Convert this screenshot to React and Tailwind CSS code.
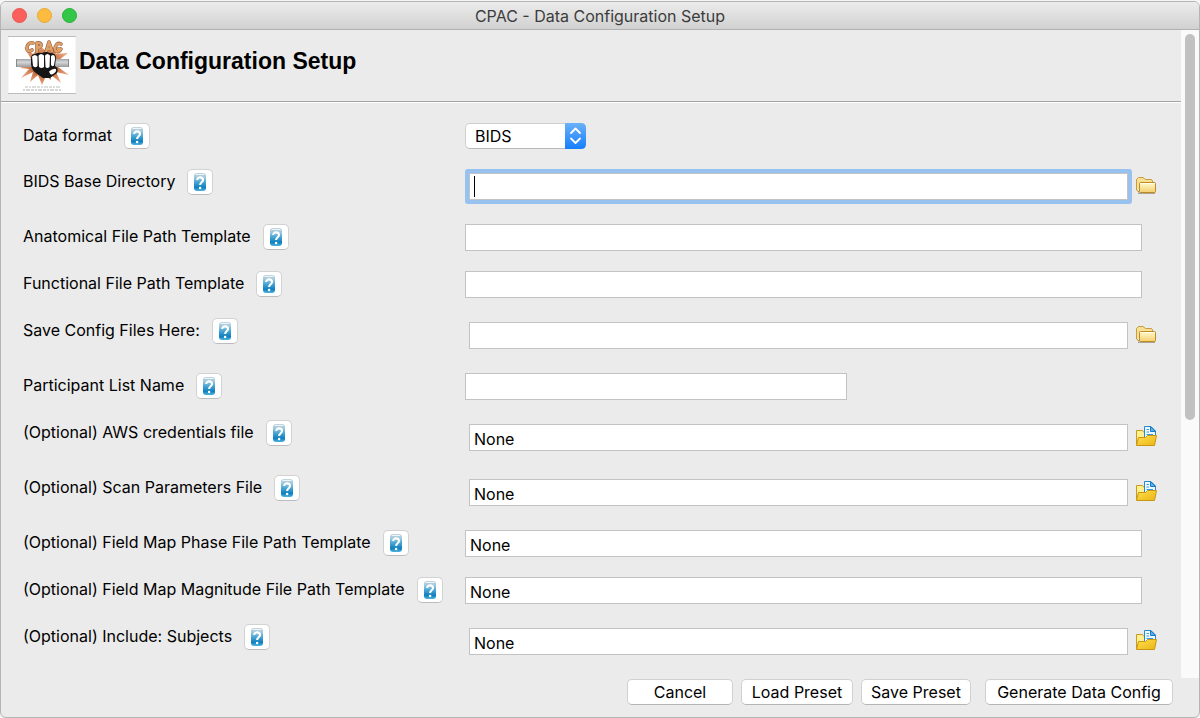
import React from 'react';

const fields = [
  { id: 'bids', label: 'BIDS Base Directory', browse: 'folder', value: '', active: true },
  { id: 'anat', label: 'Anatomical File Path Template', value: '' },
  { id: 'func', label: 'Functional File Path Template', value: '' },
  { id: 'save', label: 'Save Config Files Here:', browse: 'folder', value: '' },
  { id: 'list', label: 'Participant List Name', value: '', short: true },
  { id: 'aws', label: '(Optional) AWS credentials file', browse: 'file', value: 'None' },
  { id: 'scan', label: '(Optional) Scan Parameters File', browse: 'file', value: 'None' },
  { id: 'phase', label: '(Optional) Field Map Phase File Path Template', value: 'None' },
  { id: 'magnitude', label: '(Optional) Field Map Magnitude File Path Template', value: 'None' },
  { id: 'subjects', label: '(Optional) Include: Subjects', browse: 'file', value: 'None' },
];

function Logo() {
  return (
    <svg viewBox="0 0 68 58" className="h-[58px] w-[68px] shrink-0" aria-hidden="true">
      <defs>
        <linearGradient id="bar" x1="0" y1="0" x2="0" y2="1">
          <stop offset="0" stopColor="#a2a5a7" />
          <stop offset="0.4" stopColor="#d5d7d8" />
          <stop offset="1" stopColor="#999c9e" />
        </linearGradient>
        <radialGradient id="burst">
          <stop offset="0.3" stopColor="#8a4526" />
          <stop offset="0.65" stopColor="#d07c50" />
          <stop offset="1" stopColor="#e8a67c" />
        </radialGradient>
      </defs>
      <rect x="0.5" y="0.5" width="67" height="57" fill="#fff" />
      <path d="M0 0.5H68M0 57.5H68" stroke="#bcbcbc" />
      <path
        d="M16 11L25 18L32 10L38 15L44 10L48 18L60 17L51 24L57 27L50 31L61 39L48 36L53 47L43 39L43 44L38 40L34 49L30 39L22 46L25 36L13 42L21 33L12 32L20 28L14 23L23 23Z"
        fill="url(#burst)"
      />
      <rect x="8" y="23" width="53" height="8" rx="1" fill="url(#bar)" />
      <path d="M8.5 23v8M60.5 23v8" stroke="#8a8a8a" />
      <g fill="none" strokeLinecap="round" strokeLinejoin="round">
        <path d="M25 7C21 6 19 9 19 12S21 16 24 14M29 16V7C34 6 35 11 29 12M38 16L41 6L44 15M39 13H43M53 8C49 6 47 10 47 13S51 17 53 13H50" stroke="#94603f" strokeWidth="3.6" />
        <path d="M25 7C21 6 19 9 19 12S21 16 24 14M29 16V7C34 6 35 11 29 12M38 16L41 6L44 15M39 13H43M53 8C49 6 47 10 47 13S51 17 53 13H50" stroke="#e0a068" strokeWidth="2.4" />
      </g>
      <path d="M23 23Q23 18 27 18Q31 16 34 17Q38 15 42 17Q48 17 48 22L47 30Q51 32 49 37L42 42L35 42L28 37Q22 33 23 23Z" fill="#161616" />
      <path d="M24 20.5Q27 17.5 29.5 20.5V30Q27.5 32.5 25 30ZM30.5 19.5Q33 16.5 36 19.5V31Q33.5 33 31 31ZM37 19.5Q39.5 16.5 42 19.5L41.5 31Q39 33 37.5 31ZM43 20Q46.5 17.5 47.2 22L46 29.5Q44 31 43 29Z" fill="#fff" />
      <path d="M41 35.5Q45 32 48 33Q49 36 44 38.5Q42 39 41 35.5Z" fill="#fff" />
      <path d="M17 51H53" stroke="#bcbcbc" strokeWidth="1" strokeDasharray="3 1 2 1 4 1" />
      <path d="M15 54H54" stroke="#adadad" strokeWidth="1" strokeDasharray="2 1 4 1 3 1" />
    </svg>
  );
}

function HelpButton({ topic }) {
  return (
    <button
      type="button"
      aria-label={`Help: ${topic}`}
      className="flex h-[26px] w-[26px] shrink-0 items-center justify-center rounded-[5px] border border-[#d2d2d2] border-b-[#bcbcbc] bg-white"
    >
      <svg viewBox="0 0 14 20" className="h-5 w-3.5" aria-hidden="true">
        <defs>
          <linearGradient id="help" x1="0" y1="0" x2="0" y2="1">
            <stop offset="0" stopColor="#c5d4dc" />
            <stop offset="0.25" stopColor="#9cc8de" />
            <stop offset="0.5" stopColor="#4aa6d4" />
            <stop offset="0.8" stopColor="#0f7fbe" />
            <stop offset="1" stopColor="#4fb5e0" />
          </linearGradient>
        </defs>
        <rect x="1" y="1" width="12" height="18" rx="3" fill="url(#help)" />
        <path d="M3 2.5h8" stroke="#eff5f7" strokeLinecap="round" />
        <path d="M4.2 8C4.2 4.5 10 4.6 10 8C10 10.3 7.1 10.3 7.1 13" fill="none" stroke="#fff" strokeWidth="2.1" />
        <circle cx="7.1" cy="16" r="1.3" fill="#fff" />
      </svg>
    </button>
  );
}

function BrowseIcon({ kind }) {
  return (
    <svg viewBox="0 0 22 22" className="h-[22px] w-[22px]" aria-hidden="true">
      <defs>
        <linearGradient id="folder" x1="0" y1="0" x2="0" y2="1">
          <stop offset="0" stopColor="#fffbd0" />
          <stop offset="1" stopColor="#f3cf6b" />
        </linearGradient>
        <linearGradient id="open" x1="0" y1="0" x2="1" y2="1">
          <stop offset="0" stopColor="#ffe04f" />
          <stop offset="1" stopColor="#ebb414" />
        </linearGradient>
      </defs>
      {kind === 'folder' ? (
        <>
          <path d="M3 19.3H20" stroke="#aaa497" strokeWidth="1.4" />
          <path d="M1.5 16V5.5L3.5 3.5H8L10.5 5.5H16.5L17.5 7V9" fill="#f8df91" stroke="#c79b42" />
          <path d="M1.5 16L4 18" stroke="#b98928" />
          <rect x="4.5" y="8.5" width="16" height="10" rx="1" fill="url(#folder)" stroke="#bd8b23" />
          <path d="M6 9.5H19" stroke="#fffde8" />
        </>
      ) : (
        <>
          <path d="M1.5 20V5.5H7.5L9 7.5H17.5V12" fill="#fff08f" stroke="#c99a22" />
          <path d="M9.5 12.5V1.5H16L20.5 6V12.5" fill="#eef8ff" stroke="#2688ce" />
          <path d="M15.5 1.5V6.5H20.5Z" fill="#5fb0e8" stroke="#197bc4" />
          <path d="M11.5 4.5H14M11.5 7H14M11.5 9.5H18" stroke="#3d9bdb" strokeWidth="1.2" />
          <path d="M1.5 20.5L3.5 12.5H10.5L12.5 10.5H21.5L19.5 20.5Z" fill="url(#open)" stroke="#c99612" />
        </>
      )}
    </svg>
  );
}

function FieldLabel({ id, children }) {
  return (
    <div className="flex w-[442px] shrink-0 items-start gap-3">
      <label htmlFor={id} className="whitespace-nowrap leading-6">
        {children}
      </label>
      <HelpButton topic={children} />
    </div>
  );
}

const inputClass = 'h-[27px] w-full border border-[#c3c3c3] bg-white px-1 pt-[3px] text-base leading-5 outline-none';

function FieldRow({ field }) {
  const { id, label, browse, value, active, short } = field;
  return (
    <div className="flex items-start pb-5">
      <FieldLabel id={id}>{label}</FieldLabel>
      {browse ? (
        <div className="flex flex-1 items-center gap-[3px] pr-6">
          <div className={active ? 'relative flex-1 rounded-[3px] bg-[#97c2f0] p-1' : 'flex-1 p-1'}>
            <input id={id} type="text" defaultValue={value} className={`${inputClass} block`} />
            {active && <span className="absolute left-[9px] top-[7px] h-[21px] w-px bg-black" />}
          </div>
          <button type="button" aria-label={`Browse: ${label}`} className="shrink-0 pb-[3px]">
            <BrowseIcon kind={browse} />
          </button>
        </div>
      ) : (
        <div className="flex-1 pr-[39px]">
          <input id={id} type="text" defaultValue={value} className={`${inputClass} block ${short ? 'max-w-[382px]' : ''}`} />
        </div>
      )}
    </div>
  );
}

const actionClass =
  'h-[26px] rounded-[5px] border border-[#d0d0d0] border-b-[#b5b5b5] bg-white text-base leading-6 whitespace-nowrap';

export default function App() {
  return (
    <div className="h-screen bg-[#f5f5f5] pt-px font-['Inter',sans-serif] text-base text-black">
      <div className="flex h-full flex-col overflow-hidden rounded-[6px] border border-[#b4b4b4] bg-[#ebebeb]">
        <header className="grid h-7 shrink-0 grid-cols-[1fr_auto_1fr] items-center border-b border-[#b1b1b1] bg-linear-to-b from-[#ececec] to-[#d1d1d1]">
          <div className="flex gap-2.5 pl-[11px]">
            <button type="button" aria-label="Close" className="h-[15px] w-[15px] rounded-full border border-[#e9544f] bg-[#fc605c]" />
            <button type="button" aria-label="Minimize" className="h-[15px] w-[15px] rounded-full border border-[#e5a935] bg-[#fdbc40]" />
            <button type="button" aria-label="Zoom" className="h-[15px] w-[15px] rounded-full border border-[#2bae3a] bg-[#33c748]" />
          </div>
          <p className="text-[#3c3c3c]">CPAC - Data Configuration Setup</p>
        </header>

        <div className="flex min-h-0 flex-1">
          <main className="min-w-0 flex-1 overflow-hidden">
            <div className="flex gap-[3px] border-b border-[#a3a3a3] px-[7px] pb-[7px] pt-1.5">
              <Logo />
              <h1 className="pt-[11px] font-['Liberation_Sans',sans-serif] text-[23px] leading-7 font-bold">
                Data Configuration Setup
              </h1>
            </div>
            <form className="border-t border-white pl-[22px] pt-5">
              <div className="flex items-start pb-5">
                <FieldLabel id="format">Data format</FieldLabel>
                <div className="relative">
                  <select
                    id="format"
                    className="block h-[26px] w-[121px] appearance-none rounded-[5px] border border-[#cfcfcf] border-b-[#b8b8b8] bg-white pl-[9px] text-base leading-6 outline-none"
                  >
                    <option>BIDS</option>
                  </select>
                  <svg viewBox="0 0 21 26" className="pointer-events-none absolute right-0 top-0 h-[26px] w-[21px]" aria-hidden="true">
                    <defs>
                      <linearGradient id="arrows" x1="0" y1="0" x2="0" y2="1">
                        <stop offset="0" stopColor="#6bb1fa" />
                        <stop offset="1" stopColor="#157efb" />
                      </linearGradient>
                    </defs>
                    <path d="M0 0H16Q21 0 21 5V21Q21 26 16 26H0Z" fill="url(#arrows)" />
                    <path d="M6 10L10.5 5.5L15 10M6 15.5L10.5 20L15 15.5" fill="none" stroke="#fff" strokeWidth="1.8" strokeLinecap="round" strokeLinejoin="round" />
                  </svg>
                </div>
              </div>
              {fields.map((field) => (
                <FieldRow key={field.id} field={field} />
              ))}
            </form>
          </main>
          <div className="flex w-[18px] shrink-0 justify-center bg-[#fafafa] pt-1">
            <div className="h-3/5 w-2.5 rounded-full bg-[#c1c1c1]" />
          </div>
        </div>

        <footer className="flex shrink-0 justify-end gap-2 pb-3 pr-[26px] pt-px">
          <button type="button" className={`${actionClass} w-[106px]`}>Cancel</button>
          <button type="button" className={`${actionClass} w-28`}>Load Preset</button>
          <button type="button" className={`${actionClass} w-[110px]`}>Save Preset</button>
          <button type="button" className={`${actionClass} ml-1.5 w-[188px]`}>Generate Data Config</button>
        </footer>
      </div>
    </div>
  );
}
